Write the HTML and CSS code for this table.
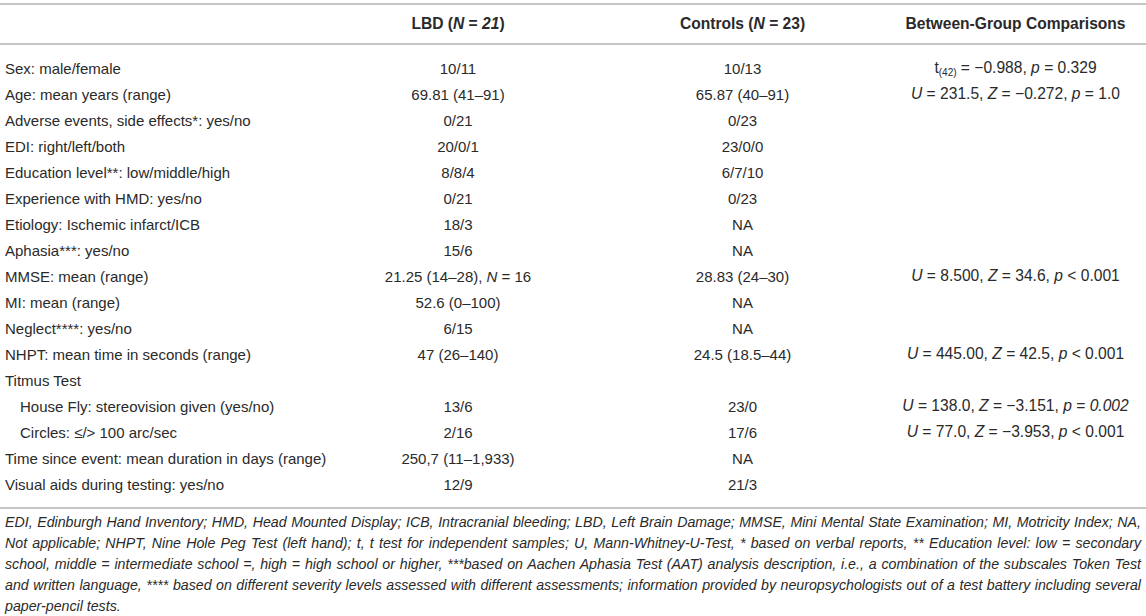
FILE: index.html
```html
<!DOCTYPE html>
<html lang="en">
<head>
<meta charset="utf-8">
<title>Demographics table</title>
<link rel="stylesheet" href="styles.css">
</head>
<body>
<div class="page">
<table class="demo">
  <colgroup>
    <col class="c-label">
    <col class="c-lbd">
    <col class="c-ctrl">
    <col class="c-cmp">
  </colgroup>
  <thead>
    <tr>
      <th></th>
      <th>LBD (<i>N</i> = <i>21</i>)</th>
      <th>Controls (<i>N</i> = 23)</th>
      <th>Between-Group Comparisons</th>
    </tr>
  </thead>
  <tbody>
    <tr><td>Sex: male/female</td><td>10/11</td><td>10/13</td><td class="stat">t<sub>(42)</sub> = −0.988, <i>p</i> = 0.329</td></tr>
    <tr><td>Age: mean years (range)</td><td>69.81 (41–91)</td><td>65.87 (40–91)</td><td class="stat"><i>U</i> = 231.5, <i>Z</i> = −0.272, <i>p</i> = 1.0</td></tr>
    <tr><td>Adverse events, side effects*: yes/no</td><td>0/21</td><td>0/23</td><td></td></tr>
    <tr><td>EDI: right/left/both</td><td>20/0/1</td><td>23/0/0</td><td></td></tr>
    <tr><td>Education level**: low/middle/high</td><td>8/8/4</td><td>6/7/10</td><td></td></tr>
    <tr><td>Experience with HMD: yes/no</td><td>0/21</td><td>0/23</td><td></td></tr>
    <tr><td>Etiology: Ischemic infarct/ICB</td><td>18/3</td><td>NA</td><td></td></tr>
    <tr><td>Aphasia***: yes/no</td><td>15/6</td><td>NA</td><td></td></tr>
    <tr><td>MMSE: mean (range)</td><td>21.25 (14–28), <i>N</i> = 16</td><td>28.83 (24–30)</td><td class="stat"><i>U</i> = 8.500, <i>Z</i> = 34.6, <i>p</i> &lt; 0.001</td></tr>
    <tr><td>MI: mean (range)</td><td>52.6 (0–100)</td><td>NA</td><td></td></tr>
    <tr><td>Neglect****: yes/no</td><td>6/15</td><td>NA</td><td></td></tr>
    <tr><td>NHPT: mean time in seconds (range)</td><td>47 (26–140)</td><td>24.5 (18.5–44)</td><td class="stat"><i>U</i> = 445.00, <i>Z</i> = 42.5, <i>p</i> &lt; 0.001</td></tr>
    <tr><td>Titmus Test</td><td></td><td></td><td></td></tr>
    <tr><td class="sub-item">House Fly: stereovision given (yes/no)</td><td>13/6</td><td>23/0</td><td class="stat"><i>U</i> = 138.0, <i>Z</i> = −3.151, <i>p</i> = <i>0.002</i></td></tr>
    <tr><td class="sub-item">Circles: ≤/&gt; 100 arc/sec</td><td>2/16</td><td>17/6</td><td class="stat"><i>U</i> = 77.0, <i>Z</i> = −3.953, <i>p</i> &lt; 0.001</td></tr>
    <tr><td>Time since event: mean duration in days (range)</td><td>250,7 (11–1,933)</td><td>NA</td><td></td></tr>
    <tr><td>Visual aids during testing: yes/no</td><td>12/9</td><td>21/3</td><td></td></tr>
  </tbody>
</table>
<p class="notes">EDI, Edinburgh Hand Inventory; HMD, Head Mounted Display; ICB, Intracranial bleeding; LBD, Left Brain Damage; MMSE, Mini Mental State Examination; MI, Motricity Index; NA, Not applicable; NHPT, Nine Hole Peg Test (left hand); t, t test for independent samples; U, Mann-Whitney-U-Test, * based on verbal reports, ** Education level: low = secondary school, middle = intermediate school =, high = high school or higher, ***based on Aachen Aphasia Test (AAT) analysis description, i.e., a combination of the subscales Token Test and written language, **** based on different severity levels assessed with different assessments; information provided by neuropsychologists out of a test battery including several paper-pencil tests.</p>
</div>
</body>
</html>
```
FILE: styles.css
```css
html, body {
  margin: 0;
  padding: 0;
  background: #ffffff;
}

.page {
  width: 1146px;
  padding-top: 3px;
  font-family: "Liberation Sans", Arial, Helvetica, sans-serif;
  color: #2a2a2a;
}

.demo {
  width: 1146px;
  border-collapse: collapse;
  table-layout: fixed;
  font-size: 15px;
}

.c-label { width: 316px; }
.c-lbd { width: 284px; }
.c-ctrl { width: 285px; }
.c-cmp { width: 261px; }

.demo thead th {
  height: 38px;
  padding: 0;
  font-size: 15.6px;
  font-weight: bold;
  text-align: center;
  vertical-align: middle;
  border-top: 2px solid #c6c6c6;
  border-bottom: 2px solid #c6c6c6;
}

.demo tbody td {
  height: 26px;
  padding: 0;
  text-align: center;
  vertical-align: middle;
  white-space: nowrap;
}

.demo tbody td.stat {
  font-size: 15.6px;
}

.demo tbody td:first-child {
  text-align: left;
  padding-left: 5px;
}

.demo tbody td.sub-item {
  padding-left: 20px;
}

.demo tbody tr:first-child td {
  padding-top: 10px;
}

.demo tbody tr:last-child td {
  padding-bottom: 10px;
  border-bottom: 2px solid #c6c6c6;
}

.demo sub {
  font-size: 10px;
  line-height: 0;
  vertical-align: -3px;
}

.notes {
  margin: 0;
  padding: 3px 5px 0 5px;
  font-size: 14.2px;
  line-height: 21px;
  font-style: italic;
  text-align: justify;
}
```
